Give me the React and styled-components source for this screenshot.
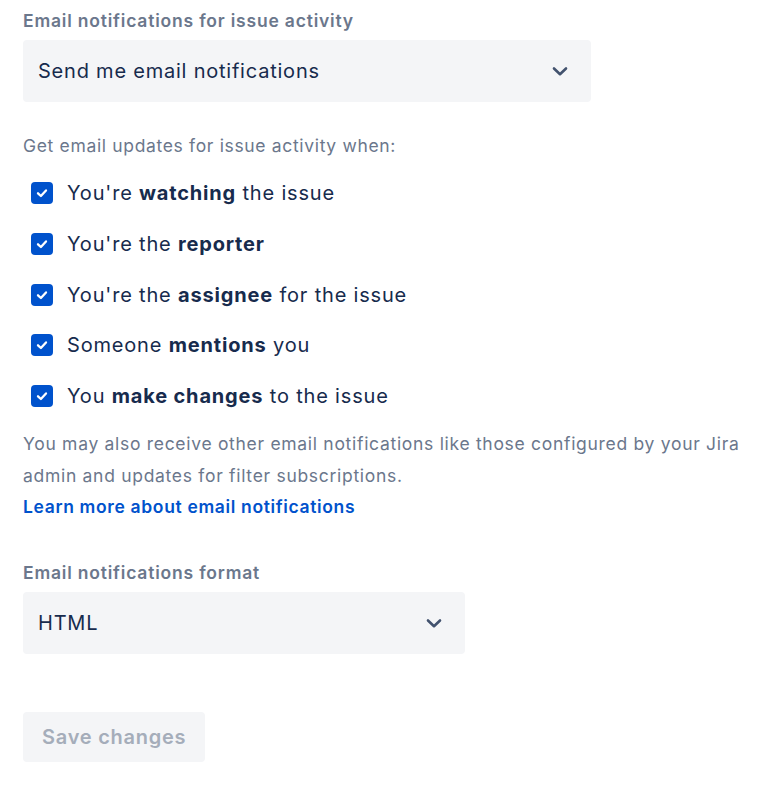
import React, { useState } from "react";
import styled, { createGlobalStyle } from "styled-components";

const GlobalStyle = createGlobalStyle`
  body {
    margin: 0;
    background: #ffffff;
    font-family: Inter, "Noto Sans", sans-serif;
    color: #172b4d;
  }
`;

const Page = styled.div`
  padding: 10px 23px 40px;
  display: flex;
  flex-direction: column;
`;

const FieldLabel = styled.div`
  font-size: 17.5px;
  font-weight: 600;
  letter-spacing: 0.8px;
  color: #6b778c;
  line-height: 22px;
  margin-top: ${({ top }) => top || 0}px;
`;

const Select = styled.div`
  margin-top: 8px;
  width: ${({ width }) => width}px;
  height: 62px;
  box-sizing: border-box;
  background: #f4f5f7;
  border-radius: 4px;
  display: flex;
  align-items: center;
  justify-content: space-between;
  padding: 0 21px 0 15px;
  font-size: 20px;
  letter-spacing: 0.78px;
  color: #172b4d;
`;

const Hint = styled.div`
  margin-top: 33px;
  font-size: 17.5px;
  letter-spacing: 0.66px;
  color: #6b778c;
  line-height: 22px;
`;

const CheckList = styled.div`
  margin-top: 11px;
  display: flex;
  flex-direction: column;
`;

const CheckRow = styled.label`
  display: flex;
  align-items: center;
  height: 50.7px;
  padding-left: 8px;
  gap: 14px;
  font-size: 20px;
  letter-spacing: 0.82px;
  color: #172b4d;
  cursor: pointer;

  b {
    font-weight: 700;
  }
`;

const Box = styled.span`
  width: 22px;
  height: 22px;
  border-radius: 4px;
  background: ${({ checked }) => (checked ? "#0052cc" : "#fafbfc")};
  border: ${({ checked }) => (checked ? "none" : "2px solid #dfe1e6")};
  box-sizing: border-box;
  display: flex;
  align-items: center;
  justify-content: center;
  flex-shrink: 0;
`;

const Note = styled.p`
  margin: 7px 0 0;
  font-size: 17.5px;
  letter-spacing: 0.7px;
  line-height: 32px;
  color: #6b778c;
  max-width: 722px;
`;

const Link = styled.a`
  margin-top: 1px;
  font-size: 17.5px;
  font-weight: 600;
  letter-spacing: 0.65px;
  color: #0052cc;
  text-decoration: none;
  line-height: 28px;
`;

const SaveButton = styled.button`
  margin-top: 58px;
  align-self: flex-start;
  height: 50px;
  padding: 0 19px;
  border: none;
  border-radius: 4px;
  background: #f4f5f7;
  color: #a5adba;
  font-family: inherit;
  font-size: 20px;
  font-weight: 600;
  letter-spacing: 0.75px;
`;

const Chevron = () => (
  <svg width="20" height="20" viewBox="0 0 20 20">
    <path
      d="M4 7.5 L10 13.2 L16 7.5"
      fill="none"
      stroke="#42526e"
      strokeWidth="2.6"
      strokeLinecap="round"
      strokeLinejoin="round"
    />
  </svg>
);

const Tick = () => (
  <svg width="14" height="14" viewBox="0 0 14 14">
    <path
      d="M3 7.3 L5.9 10 L11 4.4"
      fill="none"
      stroke="#fff"
      strokeWidth="2.3"
      strokeLinecap="round"
      strokeLinejoin="round"
    />
  </svg>
);

const options = [
  ["You're ", "watching", " the issue"],
  ["You're the ", "reporter", ""],
  ["You're the ", "assignee", " for the issue"],
  ["Someone ", "mentions", " you"],
  ["You ", "make changes", " to the issue"],
];

export default function App() {
  const [checked, setChecked] = useState(options.map(() => true));

  const toggle = (i) =>
    setChecked((prev) => prev.map((c, j) => (j === i ? !c : c)));

  return (
    <>
      <GlobalStyle />
      <Page>
        <FieldLabel>Email notifications for issue activity</FieldLabel>
        <Select width={568}>
          <span>Send me email notifications</span>
          <Chevron />
        </Select>

        <Hint>Get email updates for issue activity when:</Hint>
        <CheckList>
          {options.map(([pre, bold, post], i) => (
            <CheckRow key={bold} onClick={() => toggle(i)}>
              <Box checked={checked[i]}>{checked[i] && <Tick />}</Box>
              <span>
                {pre}
                <b>{bold}</b>
                {post}
              </span>
            </CheckRow>
          ))}
        </CheckList>

        <Note>
          You may also receive other email notifications like those configured
          by your Jira admin and updates for filter subscriptions.
        </Note>
        <Link href="#">Learn more about email notifications</Link>

        <FieldLabel top={41}>Email notifications format</FieldLabel>
        <Select width={442}>
          <span>HTML</span>
          <Chevron />
        </Select>

        <SaveButton disabled>Save changes</SaveButton>
      </Page>
    </>
  );
}
